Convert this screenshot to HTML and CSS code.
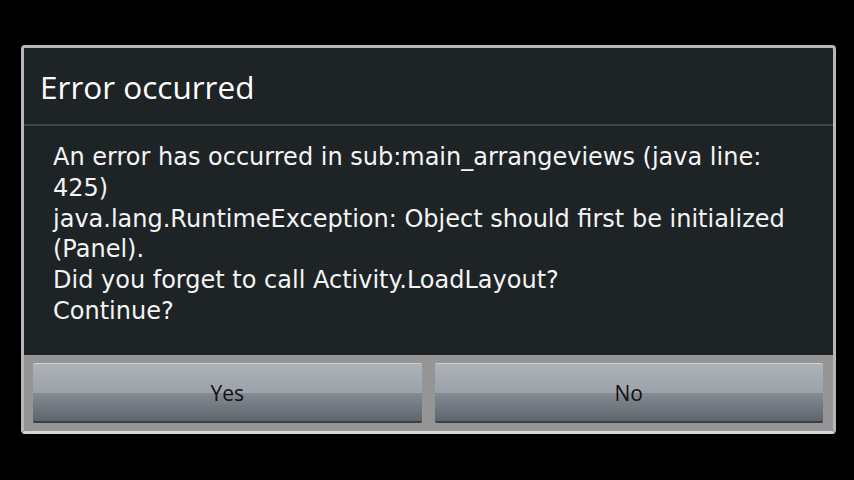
FILE: index.html
```html
<!DOCTYPE html>
<html lang="en">
<head>
  <meta charset="UTF-8" />
  <meta name="viewport" content="width=device-width, initial-scale=1.0"/>
  <title>Error occurred</title>
  <link rel="stylesheet" href="styles.css">
</head>
<body>
  <div class="dialog">
    <div class="title">Error occurred</div>
    <div class="message">
      An error has occurred in sub:main_arrangeviews (java line: 425)<br>
      java.lang.RuntimeException: Object should first be initialized (Panel).<br>
      Did you forget to call Activity.LoadLayout?<br>
      Continue?
    </div>
    <div class="buttons">
      <button>Yes</button>
      <button>No</button>
    </div>
  </div>
</body>
</html>
```

FILE: styles.css
```css
body {
  margin: 0;
  background-color: #000;
  font-family: 'Open Sans', 'DejaVu Sans', sans-serif;
  padding: 45px 0 0 21px;
}
.dialog {
  width: 809px;
  border: 3px solid #b3b8bd;
  border-bottom-color: #d3d7db;
  border-radius: 4px;
  background-color: #1e2326;
  overflow: hidden;
}
.title {
  height: 76px;
  display: flex;
  align-items: center;
  padding-left: 16px;
  font-size: 31.5px;
  color: #fff;
  border-bottom: 2px solid #404547;
}
.message {
  height: 229px;
  box-sizing: border-box;
  padding: 16px 26px 0 29px;
  font-family: 'DejaVu Sans', sans-serif;
  font-size: 24px;
  line-height: 30.8px;
  color: #f4f4f4;
}
.buttons {
  display: flex;
  gap: 13px;
  padding: 8px 10px 8px 9px;
  background-color: #959595;
}
.buttons button {
  flex: 1;
  height: 60px;
  border: none;
  border-top: 1px solid #cdd1d5;
  border-bottom: 2px solid #3b3f45;
  border-radius: 2px;
  background: linear-gradient(#adb2b8 0%, #9ca2a9 50%, #858b93 51%, #5f656d 100%);
  font-family: 'Open Sans', 'DejaVu Sans', sans-serif;
  font-size: 21px;
  color: #111;
}
```
